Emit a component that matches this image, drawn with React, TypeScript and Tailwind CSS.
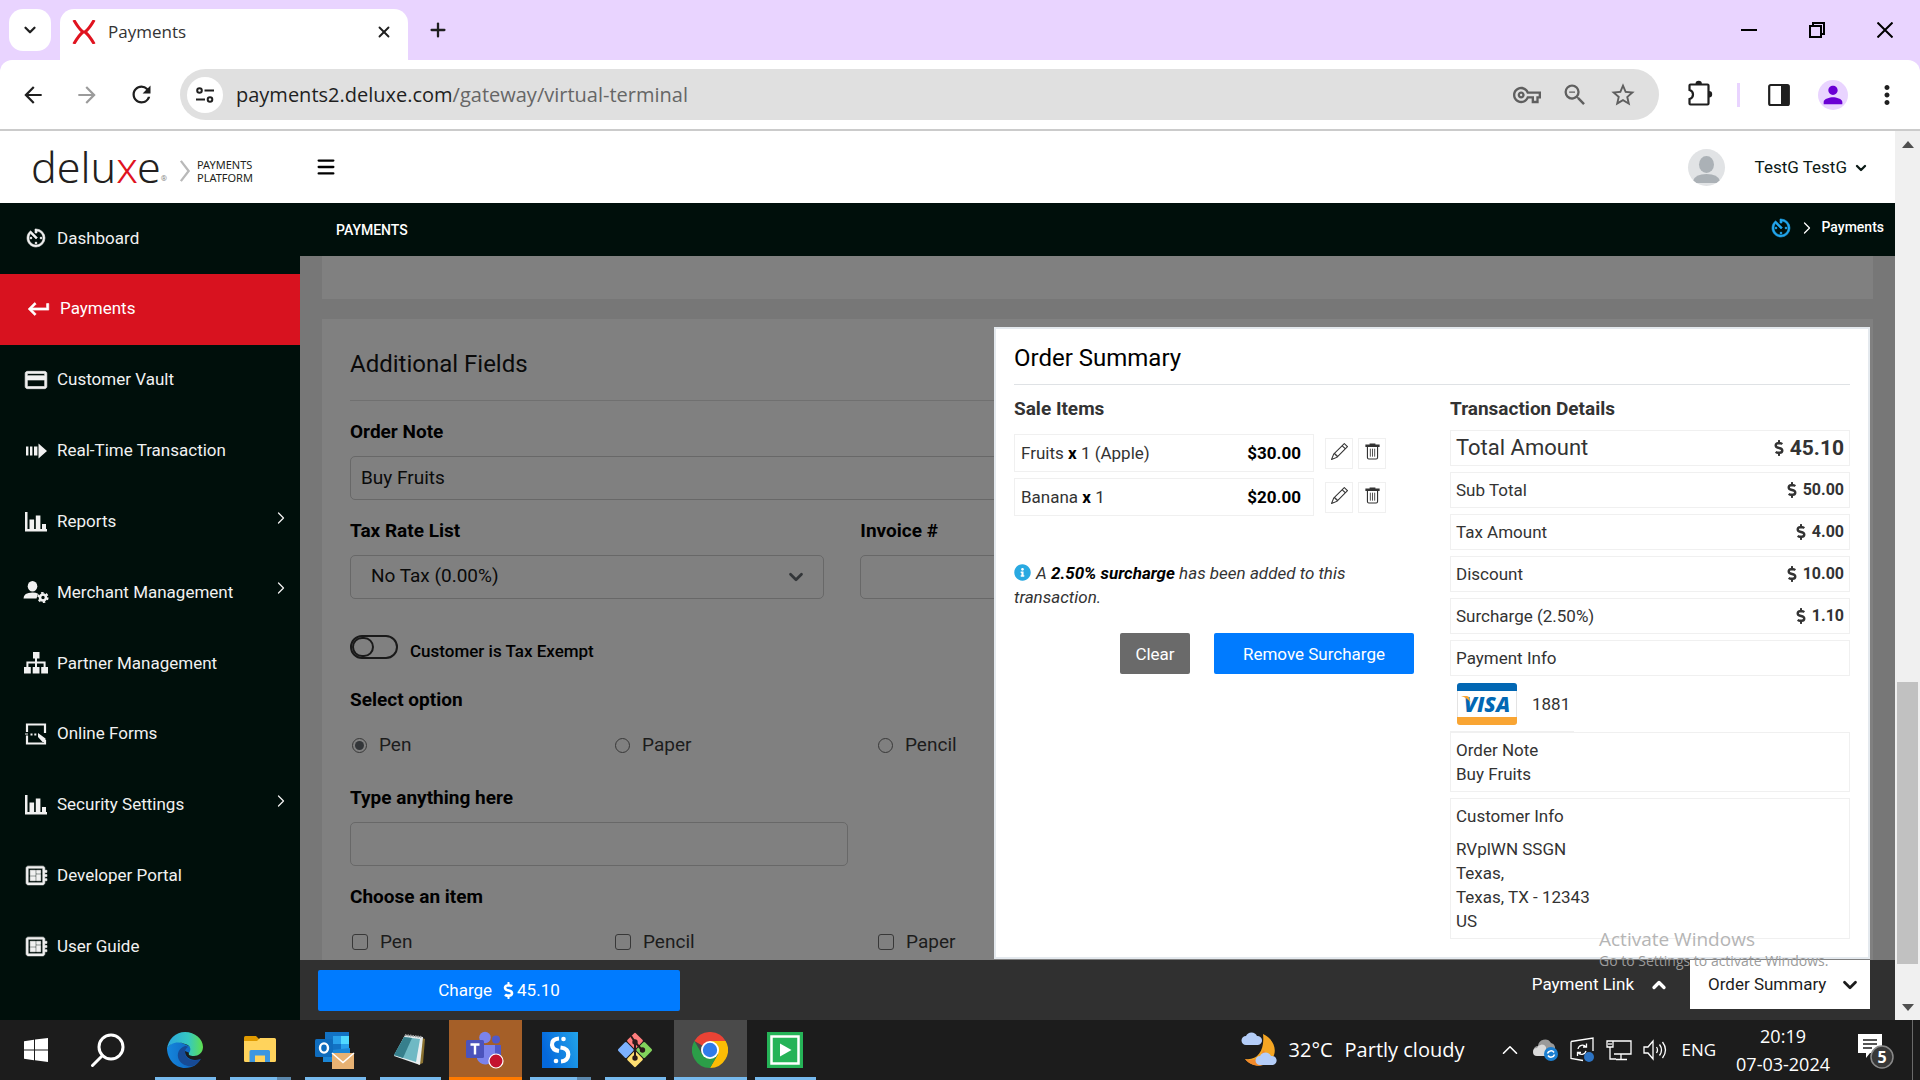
import React from "react";
import {
  MdAvTimer,
  MdKeyboardReturn,
  MdOutlineDeveloperBoard,
  MdMoreVert,
  MdArrowBack,
  MdArrowForward,
  MdRefresh,
  MdStarOutline,
  MdOutlineVpnKey,
  MdZoomOut,
  MdPerson,
  MdCreditCard,
} from "react-icons/md";
import { FaInfoCircle, FaDollarSign } from "react-icons/fa";
import { BsPencil } from "react-icons/bs";
import { ChevronDown, ChevronRight, ChevronUp, X, Plus, Menu } from "lucide-react";

const segoe = "font-['Open_Sans','Noto_Sans',sans-serif]";

/* ---------- icons ---------- */

function BarsIcon() {
  return (
    <svg viewBox="0 0 22 20" className="h-5 w-[22px]" fill="currentColor" aria-hidden="true">
      <path d="M0 0h2.500v17H22v2.600H0zM4.500 7.500h4.600V17H4.500zM10.800 3.500h4.600V17h-4.600zM17 12h4v5h-4z" />
    </svg>
  );
}

function StripedArrowIcon() {
  return (
    <svg viewBox="0 0 22 16" className="h-4 w-[22px]" fill="currentColor" aria-hidden="true">
      <path d="M1 3.500h2.400v9H1zM5 3.500h2.400v9H5zM9 3.500h3.400v9H9zM13.500 0.500L22 8l-8.500 7.500z" />
    </svg>
  );
}

function MerchantIcon() {
  return (
    <svg viewBox="0 0 26 22" className="h-[22px] w-[26px]" fill="currentColor" aria-hidden="true">
      <ellipse cx="9.500" cy="5.200" rx="4.800" ry="5.200" />
      <path d="M0.500 17.500q0-6 9-6 3.500 0 5.500 1.200l-1.500 4.800z" />
      <circle cx="20" cy="16.500" r="3" fill="none" stroke="currentColor" strokeWidth="2.600" />
      <circle cx="20" cy="16.500" r="4.700" fill="none" stroke="currentColor" strokeWidth="1.800" strokeDasharray="2.460 2.460" />
    </svg>
  );
}

function HierarchyIcon() {
  return (
    <svg viewBox="0 0 24 22" className="h-[22px] w-6" fill="currentColor" aria-hidden="true">
      <path d="M9 0h6.500v6.500H9zM0 15h6.800v6.500H0zM8.700 15h6.800v6.500H8.700zM17.200 15H24v6.500h-6.800z" />
      <path d="M12 6v9M3.400 15v-4.500h17.200V15" fill="none" stroke="currentColor" strokeWidth="2" />
    </svg>
  );
}

function OnlineFormIcon() {
  return (
    <svg viewBox="0 0 22 22" className="h-[22px] w-[22px]" aria-hidden="true">
      <path d="M2 9V1.500h18V10M2 12.500V20.500h18V17" fill="none" stroke="currentColor" strokeWidth="2.200" />
      <path d="M13 10l7.500 5.500V19h-3L13 14zM5.500 10.500h2v2h-2zM9.300 10.500h2v2h-2z" fill="currentColor" />
      <path d="M0 10.500h3v1H0z" fill="currentColor" />
    </svg>
  );
}

function TrashIcon() {
  return (
    <svg viewBox="0 0 16 18" className="h-[17px] w-[15px]" fill="none" stroke="currentColor" strokeWidth="1.200" aria-hidden="true">
      <path d="M1 3.500V2.200h14v1.300zM5.500 2V1h5v1M2.600 3.800V15.500q0 1.500 1.500 1.500h7.800q1.500 0 1.500-1.500V3.800" />
      <path d="M5.700 6v8.500M8 6v8.500M10.300 6v8.500" strokeWidth="0.900" />
    </svg>
  );
}

function Favicon() {
  return (
    <svg viewBox="0 0 24 24" className="h-6 w-6" fill="none" stroke="#e0131f" strokeWidth="3" aria-hidden="true">
      <path d="M1.800 0Q7 9 11 12Q7 15 1.800 24M22.200 0Q17 9 13 12Q17 15 22.200 24M9 12h6" />
    </svg>
  );
}

function TuneIcon() {
  return (
    <svg viewBox="0 0 18 18" className="h-[18px] w-[18px]" fill="none" stroke="#1f1f1f" strokeWidth="2" aria-hidden="true">
      <circle cx="3.500" cy="4.500" r="2.300" />
      <path d="M8.500 4.500H18M0 13.500h9" />
      <circle cx="14" cy="13.500" r="2.300" />
    </svg>
  );
}

function PuzzleIcon() {
  return (
    <svg viewBox="0 0 26 26" className="h-[26px] w-[26px]" aria-hidden="true">
      <path d="M3.500 4.500h17q1 0 1 1v18q0 1-1 1h-17q-1 0-1-1V19q3.500-1 3.500-4.500T2.500 10V5.500q0-1 1-1z" fill="none" stroke="currentColor" strokeWidth="2.200" />
      <path d="M8.500 4a3.200 3.200 0 0 1 6.400 0zM22 11a3.200 3.200 0 0 1 0 6.400z" fill="currentColor" />
    </svg>
  );
}

function VisaCard() {
  return (
    <svg viewBox="0 0 60 42" className="h-[42px] w-[60px]" role="img" aria-label="Visa">
      <rect x="0.500" y="0.500" width="59" height="41" rx="3" fill="#fff" stroke="#e3e3e3" />
      <path d="M3 0h54a3 3 0 0 1 3 3v5H0V3a3 3 0 0 1 3-3z" fill="#0267b3" />
      <path d="M0 34h60v5a3 3 0 0 1-3 3H3a3 3 0 0 1-3-3z" fill="#f9a533" />
      <text x="7" y="28.500" fontSize="21" fontWeight="800" fontStyle="italic" fontFamily="Open Sans, sans-serif" fill="#0267b3">VISA</text>
      <path d="M4 13h6q2 0 2.500 2.500l1 4Q10 14.500 4 13z" fill="#f9a533" />
    </svg>
  );
}

/* ---------- browser frame ---------- */

function TabStrip() {
  return (
    <div className="flex h-[60px] shrink-0 items-stretch bg-[#e9d4ff]">
      <button aria-label="Search tabs" className="mt-[9px] ml-[9px] flex h-[42px] w-[42px] items-center justify-center rounded-[14px] bg-white text-[#1f1f1f]">
        <ChevronDown size={18} strokeWidth={3} />
      </button>
      <div className="mt-[9px] ml-[9px] flex w-[348px] items-center rounded-t-[14px] bg-white pr-3 pb-[6px] pl-3">
        <Favicon />
        <span className={`ml-3 text-[17px] text-[#333] ${segoe}`}>Payments</span>
        <button aria-label="Close tab" className="ml-auto flex h-6 w-6 items-center justify-center text-[#1f1f1f]">
          <X size={18} strokeWidth={2.5} />
        </button>
      </div>
      <button aria-label="New tab" className="ml-[18px] flex w-6 items-center justify-center text-[#1f1f1f]">
        <Plus size={22} strokeWidth={2.5} />
      </button>
      <div className="ml-auto flex items-center pr-[1px] text-black">
        <button aria-label="Minimize" className="flex h-full w-[69px] items-center justify-center">
          <svg viewBox="0 0 16 16" className="h-4 w-4" aria-hidden="true"><path d="M0 8h16" stroke="currentColor" strokeWidth="2" /></svg>
        </button>
        <button aria-label="Restore" className="flex h-full w-[68px] items-center justify-center">
          <svg viewBox="0 0 16 16" className="h-4 w-4" fill="none" stroke="currentColor" strokeWidth="2" aria-hidden="true"><path d="M1 4h11v11H1zM4 4V1h11v11h-3" /></svg>
        </button>
        <button aria-label="Close window" className="flex h-full w-[68px] items-center justify-center">
          <svg viewBox="0 0 16 16" className="h-4 w-4" stroke="currentColor" strokeWidth="2" aria-hidden="true"><path d="M0.500 0.500l15 15M15.500 0.500l-15 15" /></svg>
        </button>
      </div>
    </div>
  );
}

function Toolbar() {
  return (
    <div className="shrink-0 bg-[#e9d4ff]">
      <div className="flex h-[71px] items-center rounded-t-[12px] border-b-2 border-[#cbcbcb] bg-white pr-[18px] pl-5 text-[#1f1f1f]">
        <button aria-label="Back"><MdArrowBack size={26} /></button>
        <button aria-label="Forward" className="ml-7 text-[#9b9b9b]"><MdArrowForward size={26} /></button>
        <button aria-label="Reload" className="ml-7"><MdRefresh size={27} /></button>
        <div className="ml-[25px] flex h-[51px] flex-1 items-center rounded-full bg-[#e0e0e0] pr-[22px] pl-[7px]">
          <button aria-label="Site information" className="flex h-9 w-9 items-center justify-center rounded-full bg-white"><TuneIcon /></button>
          <div className={`ml-[13px] text-[20px] text-[#1f1f1f] ${segoe}`}>
            payments2.deluxe.com<span className="text-[#666]">/gateway/virtual-terminal</span>
          </div>
          <div className="ml-auto flex items-center gap-5 text-[#5f5f5f]">
            <button aria-label="Passwords"><MdOutlineVpnKey size={28} /></button>
            <button aria-label="Zoom"><MdZoomOut size={28} /></button>
            <button aria-label="Bookmark"><MdStarOutline size={28} /></button>
          </div>
        </div>
        <button aria-label="Extensions" className="mb-1 ml-7"><PuzzleIcon /></button>
        <span className="ml-6 h-6 w-[3px] bg-[#e9d4ff]" />
        <button aria-label="Side panel" className="ml-[28px]">
          <svg viewBox="0 0 22 24" className="h-6 w-[22px]" aria-hidden="true">
            <rect x="1.200" y="2" width="19.600" height="20" rx="1.500" fill="none" stroke="currentColor" strokeWidth="2.200" />
            <path d="M13 2h8v20h-8z" fill="currentColor" />
          </svg>
        </button>
        <button aria-label="Profile" className="ml-7 flex h-[30px] w-[30px] items-center justify-center rounded-full bg-[#e9d4ff] text-[#6a00d4]"><MdPerson size={28} /></button>
        <button aria-label="Browser menu" className="ml-6"><MdMoreVert size={30} /></button>
      </div>
    </div>
  );
}

/* ---------- application frame ---------- */

function Header() {
  return (
    <header className="flex h-[72px] shrink-0 items-center bg-white pr-[26px] pl-[31px]">
      <a href="#home" className="flex items-center" aria-label="deluxe payments platform">
        <span className="font-['Noto_Sans',sans-serif] text-[43px] leading-[56px] font-light text-[#231f20]">
          delu<span className="text-[#e0131f]">x</span>e
        </span>
        <span className="mt-6 text-[8px] text-[#888]">®</span>
        <svg viewBox="0 0 12 24" className="mt-2 ml-3 h-[22px] w-3" fill="none" stroke="#b9b9b9" strokeWidth="2.500" aria-hidden="true">
          <path d="M1.500 1l8.500 11L1.500 23" />
        </svg>
        <span className="mt-2 ml-[6px] font-['Noto_Sans',sans-serif] text-[11px] leading-[13px] text-[#231f20]">
          PAYMENTS<br />PLATFORM
        </span>
      </a>
      <button aria-label="Toggle menu" className="ml-[62px] text-black"><Menu size={22} strokeWidth={2.5} /></button>
      <div className="mr-px ml-auto flex h-[37px] w-[37px] items-end justify-center overflow-hidden rounded-full bg-[#e1e3e5]">
        <svg viewBox="0 0 37 37" className="h-[37px] w-[37px]" fill="#abb1b6" aria-hidden="true">
          <ellipse cx="18.500" cy="15.500" rx="7.500" ry="8.500" />
          <path d="M5 32q2-7 13.500-7T32 32q-2 2-3 2H8q-1 0-3-2z" />
        </svg>
      </div>
      <button className="ml-[29px] flex items-center gap-[6px] pt-[2px] text-[17px] text-[#0b1a16]">
        TestG TestG
        <ChevronDown size={16} strokeWidth={3.5} />
      </button>
    </header>
  );
}

const heavy = "[&_[fill=none]]:stroke-none";

const navItems: { label: string; icon: React.ReactNode; more?: boolean; active?: boolean }[] = [
  { label: "Dashboard", icon: <MdAvTimer size={24} strokeWidth={0.6} className={heavy} /> },
  { label: "Payments", icon: <MdKeyboardReturn size={26} strokeWidth={0.6} className={heavy} />, active: true },
  { label: "Customer Vault", icon: <MdCreditCard size={26} strokeWidth={0.6} className={heavy} /> },
  { label: "Real-Time Transaction", icon: <StripedArrowIcon /> },
  { label: "Reports", icon: <BarsIcon />, more: true },
  { label: "Merchant Management", icon: <MerchantIcon />, more: true },
  { label: "Partner Management", icon: <HierarchyIcon /> },
  { label: "Online Forms", icon: <OnlineFormIcon /> },
  { label: "Security Settings", icon: <BarsIcon />, more: true },
  { label: "Developer Portal", icon: <MdOutlineDeveloperBoard size={25} strokeWidth={0.6} className={heavy} /> },
  { label: "User Guide", icon: <MdOutlineDeveloperBoard size={25} strokeWidth={0.6} className={heavy} /> },
];

function Sidebar() {
  return (
    <nav className="w-[300px] shrink-0 bg-[#000f0b] text-white">
      <ul className="grid h-[779px] grid-rows-11">
        {navItems.map((n) => (
          <li key={n.label}>
            <a
              href={`#${n.label}`}
              className={
                n.active
                  ? "flex h-full items-center bg-[#d8121f] pr-[9px] pl-[25px] text-[17px]"
                  : "flex h-full items-center pr-[9px] pl-[22px] text-[17px] text-[#f1f1f1]"
              }
            >
              <span className="flex w-7 items-center justify-center">{n.icon}</span>
              <span className="ml-[7px]">{n.label}</span>
              {n.more && <ChevronRight size={20} strokeWidth={1.5} className="mb-2 ml-auto" />}
            </a>
          </li>
        ))}
      </ul>
    </nav>
  );
}

function Subheader() {
  return (
    <div className="flex h-[53px] shrink-0 items-center bg-[#000f0b] pr-[11px] pl-9 text-white">
      <h1 className="pt-[2px] text-[14px] font-medium">PAYMENTS</h1>
      <div className="mb-1 ml-auto flex items-center text-[14px] font-medium">
        <a href="#dashboard" aria-label="Dashboard" className="text-[#22a6ee]"><MdAvTimer size={24} strokeWidth={0.6} className={heavy} /></a>
        <ChevronRight size={20} strokeWidth={1.5} className="mx-1" />
        <span>Payments</span>
      </div>
    </div>
  );
}

/* ---------- form ---------- */

const labelClass = "block text-[19px] leading-6 font-bold text-black";
const fieldClass = "mt-3 block h-11 w-full rounded-[5px] border border-[#686868] bg-transparent pb-[2px] text-[19px] text-[#0a0a0a]";

function ChoiceRow({ type, name, options, checked }: { type: "radio" | "checkbox"; name: string; options: string[]; checked?: string }) {
  return (
    <div className="mt-[21px] flex h-6">
      {options.map((o) => (
        <label key={o} className="flex w-[263px] items-center gap-3 pl-[2px] text-[19px] leading-6 text-[#1c1c1c]">
          {type === "radio" ? (
            <input
              type="radio"
              name={name}
              defaultChecked={o === checked}
              className="h-[15px] w-[15px] appearance-none rounded-full border border-[#383838] bg-clip-content p-[2px] checked:bg-[#333639]"
            />
          ) : (
            <input type="checkbox" name={name} className="h-4 w-4 appearance-none rounded-[3px] border border-[#383838]" />
          )}
          {o}
        </label>
      ))}
    </div>
  );
}

function AdditionalFields() {
  return (
    <section className="mx-[22px] mt-5 flex-1 bg-[#808080] px-[28px] pt-[27px]">
      <h2 className="border-b border-[#707070] pb-[18px] text-[24px] leading-9 font-normal text-[#0a0a0a]">Additional Fields</h2>
      <label htmlFor="note" className={`mt-[19px] ${labelClass}`}>Order Note</label>
      <input id="note" defaultValue="Buy Fruits" className={`px-[10px] ${fieldClass}`} />
      <div className="mt-[19px] grid grid-cols-3 gap-9">
        <div>
          <label htmlFor="tax" className={labelClass}>Tax Rate List</label>
          <div className="relative">
            <select id="tax" className={`appearance-none px-5 ${fieldClass}`}>
              <option>No Tax (0.00%)</option>
            </select>
            <ChevronDown size={22} strokeWidth={3} className="pointer-events-none absolute top-[11px] right-[17px] text-[#333639]" />
          </div>
        </div>
        <div>
          <label htmlFor="invoice" className={labelClass}>Invoice #</label>
          <input id="invoice" className={`px-[10px] ${fieldClass}`} />
        </div>
      </div>
      <label className="mt-9 flex h-[26px] items-start gap-3 text-[17px] leading-5 font-medium text-black">
        <input
          type="checkbox"
          role="switch"
          className="h-6 w-12 appearance-none rounded-full border-2 border-[#1a1a1a] before:block before:h-5 before:w-[22px] before:rounded-full before:border-2 before:border-[#1a1a1a]"
        />
        <span className="self-end">Customer is Tax Exempt</span>
      </label>
      <p className={`mt-[27px] ${labelClass}`}>Select option</p>
      <ChoiceRow type="radio" name="option" options={["Pen", "Paper", "Pencil"]} checked="Pen" />
      <label htmlFor="anything" className={`mt-[29px] ${labelClass}`}>Type anything here</label>
      <div className="w-1/3">
        <input id="anything" className={`px-[10px] ${fieldClass}`} />
      </div>
      <p className={`mt-[19px] ${labelClass}`}>Choose an item</p>
      <ChoiceRow type="checkbox" name="item" options={["Pen", "Pencil", "Paper"]} />
    </section>
  );
}

/* ---------- order summary ---------- */

const box = "border border-[#f0f0f0]";

function SaleItem({ name, rest, price }: { name: string; rest: string; price: string }) {
  return (
    <li className="flex items-center">
      <div className={`flex h-[38px] w-[300px] items-center justify-between pr-3 pl-[6px] ${box}`}>
        <span>{name} <b className="font-bold text-black">x</b> {rest}</span>
        <b className="font-bold text-black">{price}</b>
      </div>
      <button aria-label={`Edit ${name}`} className={`ml-[11px] flex h-[31px] w-7 items-center justify-center pb-1 ${box}`}><BsPencil size={17} /></button>
      <button aria-label={`Delete ${name}`} className={`ml-[5px] flex h-[31px] w-7 items-center justify-center pb-1 ${box}`}><TrashIcon /></button>
    </li>
  );
}

function AmountRow({ label, value, large }: { label: string; value?: string; large?: boolean }) {
  return (
    <li className={`flex h-9 items-center justify-between px-[5px] ${box}`}>
      <span className={large ? "text-[22px]" : ""}>{label}</span>
      {value && (
        <span className="flex items-center gap-[3px] font-bold">
          <FaDollarSign size={16} />
          <span className={large ? "text-[21px]" : "text-[16px]"}>{value}</span>
        </span>
      )}
    </li>
  );
}

function OrderSummary() {
  return (
    <div role="dialog" aria-label="Order Summary" className="absolute right-[25px] bottom-px w-[876px] border-2 border-[#e4e9ee] bg-white px-[18px] pt-[11px] pb-[18px] text-[17px] leading-6 text-[#333]">
      <h2 className="border-b border-[#dfe2e5] pb-2 text-[24px] leading-9 text-black">Order Summary</h2>
      <div className="mt-3 grid grid-cols-2 gap-9">
        <section>
          <h3 className="text-[19px] leading-6 font-bold">Sale Items</h3>
          <ul className="mt-[13px] flex flex-col gap-[6px]">
            <SaleItem name="Fruits" rest="1 (Apple)" price="$30.00" />
            <SaleItem name="Banana" rest="1" price="$20.00" />
          </ul>
          <p className="mt-[45px] italic">
            <FaInfoCircle size={17} className="mr-[5px] mb-1 inline text-[#29a9e1]" />
            A <b className="font-bold text-black">2.50% surcharge</b> has been added to this transaction.
          </p>
          <div className="mt-6 flex justify-end gap-6 text-white">
            <button className="h-[41px] w-[70px] rounded-[2px] bg-[#6a6a6a]">Clear</button>
            <button className="h-[41px] w-[200px] rounded-[2px] bg-[#007bff]">Remove Surcharge</button>
          </div>
        </section>
        <section>
          <h3 className="text-[19px] leading-6 font-bold">Transaction Details</h3>
          <ul className="mt-[9px] flex flex-col gap-[6px]">
            <AmountRow label="Total Amount" value="45.10" large />
            <AmountRow label="Sub Total" value="50.00" />
            <AmountRow label="Tax Amount" value="4.00" />
            <AmountRow label="Discount" value="10.00" />
            <AmountRow label="Surcharge (2.50%)" value="1.10" />
            <AmountRow label="Payment Info" />
          </ul>
          <div className="flex h-14 w-[124px] items-center gap-[15px] border-b border-[#f0f0f0] pl-[7px]">
            <VisaCard />
            1881
          </div>
          <div className={`p-[5px] ${box}`}>
            <p>Order Note</p>
            <p>Buy Fruits</p>
          </div>
          <div className={`mt-[6px] p-[5px] ${box}`}>
            <p>Customer Info</p>
            <address className="mt-[9px] not-italic">
              RVplWN SSGN<br />Texas,<br />Texas, TX - 12343<br />US
            </address>
          </div>
        </section>
      </div>
    </div>
  );
}

function Footer() {
  return (
    <footer className="flex h-[60px] shrink-0 items-start bg-[#303030] pr-[25px] pl-[18px] text-[17px] text-white">
      <button className="mt-[10px] flex h-[41px] w-[362px] items-center justify-center rounded-[2px] bg-[#007bff]">
        Charge <FaDollarSign size={17} className="ml-2" /> 45.10
      </button>
      <button className="ml-auto flex h-[49px] items-center gap-[15px]">
        Payment Link <ChevronUp size={20} strokeWidth={4} />
      </button>
      <button className="ml-[21px] flex h-[49px] w-[180px] items-center justify-between bg-white pr-[9px] pl-[18px] text-[#1c1c1c]">
        Order Summary <ChevronDown size={22} strokeWidth={3} />
      </button>
    </footer>
  );
}

function Scrollbar() {
  return (
    <div className="flex w-[25px] shrink-0 flex-col items-center bg-[#f0f0f0]">
      <div className="flex h-[26px] items-center"><svg viewBox="0 0 12 7" className="h-[7px] w-3" aria-hidden="true"><path d="M0 7l6-7 6 7z" fill="#505050" /></svg></div>
      <div className="flex-[525]" />
      <div className="w-[21px] flex-[282] bg-[#c1c1c1]" />
      <div className="flex-[30]" />
      <div className="flex h-[26px] items-center"><svg viewBox="0 0 12 7" className="h-[7px] w-3" aria-hidden="true"><path d="M0 0l6 7 6-7z" fill="#505050" /></svg></div>
    </div>
  );
}

/* ---------- taskbar ---------- */

function EdgeIcon() {
  return (
    <svg viewBox="0 0 36 36" className="h-9 w-9" aria-hidden="true">
      <defs>
        <linearGradient id="eg" x1="0" x2="1"><stop offset="0" stopColor="#2aa6e0" /><stop offset="0.600" stopColor="#36c8c0" /><stop offset="1" stopColor="#5fe04e" /></linearGradient>
        <linearGradient id="eb" x1="0" x2="1"><stop offset="0" stopColor="#1586dc" /><stop offset="1" stopColor="#0c5cb8" /></linearGradient>
      </defs>
      <path d="M0 16C0 27 8 36 18 36c8 0 13-4 15.500-9L22 14 8 8z" fill="url(#eb)" />
      <path d="M18 14c-6 2-9 8-6 14 3 5 9 7 14 6 3-1 6-4 8-7-7 3-16 1-16-7 0-2 1-4 3-5-1-1-2-1-3-1z" fill="#174a94" />
      <path d="M18 19c0 7 7 11 15.500 8L36 20l-9 3z" fill="#1c1c1c" />
      <path d="M0 17C1 7 9 0 18 0c10 0 18 7 18 15 0 6-5 9-9 9-4 0-6-1-5-3 3-4 1-8-4-9C10 9 3 11 0 17z" fill="url(#eg)" />
    </svg>
  );
}

function FolderIcon() {
  return (
    <svg viewBox="0 0 32 28" className="h-7 w-8" aria-hidden="true">
      <path d="M0 1.500Q0 0 1.500 0H12l3 3v3H0z" fill="#e09a00" />
      <path d="M0 5h13l3-3h14.500Q32 2 32 3.500V24.500q0 1.500-1.500 1.500h-29Q0 26 0 24.500z" fill="#ffd35c" />
      <path d="M5.500 26V15.500Q5.500 14 7 14h17.500q1.500 0 1.500 1.500V26h-5v-6.500h-10V26z" fill="#3c96e0" />
    </svg>
  );
}

function OutlookIcon() {
  return (
    <svg viewBox="0 0 40 38" className="h-[38px] w-10" aria-hidden="true">
      <path d="M10 1h24v30H8V16h2z" fill="#1272c4" />
      <path d="M18 5h8v8h-8zM26 13h8v8h-8z" fill="#29a0ea" />
      <path d="M26 5h8v8h-8z" fill="#50d9ff" />
      <path d="M8 20l27-3v14H8z" fill="#1b86d6" />
      <rect x="0" y="8" width="18" height="18" rx="1.500" fill="#0f6cbd" />
      <ellipse cx="9" cy="17" rx="4" ry="4.600" fill="none" stroke="#fff" strokeWidth="2.400" />
      <path d="M17 22h22v16H17z" fill="#e8b273" />
      <path d="M17 22l11 9.500L39 22" fill="none" stroke="#fff" strokeWidth="1.600" />
    </svg>
  );
}

function NotepadIcon() {
  return (
    <svg viewBox="0 0 34 34" className="h-[34px] w-[34px]" aria-hidden="true">
      <path d="M27 4l5 2-2 24-5 2z" fill="#8a7130" />
      <path d="M12 2l18 2-3 28-26-9z" fill="#e8eef0" />
      <path d="M11 4l16 2-4 23L1 22z" fill="#6fb9c4" />
      <path d="M11 4l8 1-9 20-9-3z" fill="#367f8c" />
      <path d="M12 2l17 2" stroke="#999" strokeWidth="2" strokeDasharray="1.500 1" />
    </svg>
  );
}

function TeamsIcon() {
  return (
    <svg viewBox="0 0 38 38" className="h-[38px] w-[38px]" aria-hidden="true">
      <circle cx="19" cy="6.500" r="5.800" fill="#7b83eb" />
      <circle cx="30" cy="8.500" r="4" fill="#5059c9" />
      <path d="M24 14h11v11q-1 5-6 6h-5z" fill="#5059c9" />
      <path d="M11 14h18v11a9.500 9.500 0 0 1-18 3z" fill="#7b83eb" />
      <rect x="0" y="9" width="18" height="18" rx="1.500" fill="#4b53bc" />
      <path d="M4.500 13.500h9M9 13.500v10" stroke="#fff" strokeWidth="2.400" />
      <circle cx="30" cy="30" r="7" fill="#c4122f" stroke="#fff" strokeWidth="1.200" />
    </svg>
  );
}

function SIcon() {
  return (
    <svg viewBox="0 0 36 36" className="h-9 w-9" aria-hidden="true">
      <defs><linearGradient id="sg" x1="0" x2="1" y1="0.300" y2="0"><stop offset="0" stopColor="#0468dc" /><stop offset="1" stopColor="#22a4ea" /></linearGradient></defs>
      <path d="M0 0h36v36H0z" fill="url(#sg)" />
      <path d="M17 6.500Q9.500 7 10 13Q10.500 18 17 19M18.500 15.500q8 1 7.800 7Q26 29 19 29.500" fill="none" stroke="#fff" strokeWidth="4.200" />
      <circle cx="21.500" cy="7" r="2.300" fill="#fff" />
      <circle cx="14" cy="29" r="2.300" fill="#fff" />
    </svg>
  );
}

function GitIcon() {
  return (
    <svg viewBox="0 0 36 36" className="h-9 w-9" aria-hidden="true">
      <g transform="rotate(45 18 18)">
        <rect x="5.500" y="5.500" width="12" height="12" rx="1.500" fill="#ff7d7d" />
        <rect x="18.500" y="5.500" width="12" height="12" rx="1.500" fill="#82d35c" />
        <rect x="5.500" y="18.500" width="12" height="12" rx="1.500" fill="#7cb2ff" />
        <rect x="18.500" y="18.500" width="12" height="12" rx="1.500" fill="#ffdf72" />
      </g>
      <path d="M14 4l4 6v16M18 10l7 8" fill="none" stroke="#2a1a1a" strokeWidth="2" />
      <circle cx="18" cy="10" r="2.700" fill="#2a1a1a" />
      <circle cx="25.500" cy="18" r="2.700" fill="#2a1a1a" />
      <circle cx="18" cy="26" r="2.700" fill="#2a1a1a" />
    </svg>
  );
}

function ChromeIcon() {
  return (
    <svg viewBox="0 0 36 36" className="h-9 w-9" aria-hidden="true">
      <path d="M18 18L2.400 9A18 18 0 0 1 33.600 9z" fill="#ea4335" />
      <path d="M18 18V9h15.600A18 18 0 0 1 18 36l7.800-13.500z" fill="#fbbc05" />
      <path d="M2.400 9A18 18 0 0 0 18 36l7.800-13.500L18 18 10.200 22.500z" fill="#2b9e48" />
      <circle cx="18" cy="18" r="9" fill="#fff" />
      <circle cx="18" cy="18" r="7.200" fill="#2f7bea" />
    </svg>
  );
}

function PlayIcon() {
  return (
    <svg viewBox="0 0 36 36" className="h-9 w-9" aria-hidden="true">
      <path d="M0 0h36v36H0z" fill="#25b357" />
      <path d="M4.500 4.500h27v27h-27z" fill="none" stroke="#fff" strokeWidth="2.500" />
      <path d="M13 11.500l11.500 6.500L13 24.500z" fill="#fff" />
    </svg>
  );
}

const apps = [
  { name: "Edge", icon: <EdgeIcon /> },
  { name: "File Explorer", icon: <FolderIcon />, stacked: true },
  { name: "Outlook", icon: <OutlookIcon /> },
  { name: "Notepad", icon: <NotepadIcon /> },
  { name: "Teams", icon: <TeamsIcon />, tone: "alert" },
  { name: "Screen tool", icon: <SIcon />, stacked: true },
  { name: "Git", icon: <GitIcon /> },
  { name: "Chrome", icon: <ChromeIcon />, tone: "active" },
  { name: "Recorder", icon: <PlayIcon /> },
];

function Taskbar() {
  return (
    <div className={`flex h-[60px] shrink-0 items-stretch bg-[#1c1c1c] text-white ${segoe}`}>
      <button aria-label="Start" className="flex w-[72px] items-center justify-center">
        <svg viewBox="0 0 24 24" className="h-6 w-6" fill="#fff" aria-hidden="true"><path d="M0 3.200l10-1.400v9.700H0zM11 1.600L24 0v11.500H11zM0 12.500h10v9.700L0 20.800zM11 12.500h13V24l-13-1.700z" /></svg>
      </button>
      <button aria-label="Search" className="flex w-[72px] items-center justify-center">
        <svg viewBox="0 0 34 34" className="h-[34px] w-[34px]" fill="none" stroke="#fff" strokeWidth="3" aria-hidden="true"><circle cx="20" cy="14" r="12" /><path d="M11.500 22.500L1.500 32.500" strokeLinecap="round" /></svg>
      </button>
      <div className="ml-[5px] flex gap-[2px]">
        {apps.map((a) => (
          <button
            key={a.name}
            aria-label={a.name}
            className={
              a.tone === "alert"
                ? "flex w-[73px] flex-col items-center bg-[#a55f28]"
                : a.tone === "active"
                  ? "flex w-[73px] flex-col items-center bg-[#4a4a4a]"
                  : "flex w-[73px] flex-col items-center"
            }
          >
            <span className="flex flex-1 items-center pt-[3px] pr-[2px]">{a.icon}</span>
            {a.tone === "alert" ? (
              <span className="h-[3px] w-full bg-[#ff7a00]" />
            ) : a.tone === "active" ? (
              <span className="h-[3px] w-full bg-[#76b9ed]" />
            ) : a.stacked ? (
              <span className="flex h-[3px] w-[61px]"><span className="w-[47px] bg-[#76b9ed]" /><span className="flex-1 bg-[#5b87ab]" /></span>
            ) : (
              <span className="h-[3px] w-[61px] bg-[#76b9ed]" />
            )}
          </button>
        ))}
      </div>

      <div className="ml-auto flex items-center text-[20px]">
        <svg viewBox="0 0 38 36" className="h-9 w-[38px]" aria-hidden="true">
          <path d="M22 2c11 5 15 17 9 25s-20 9-27 0c12 2 20-8 18-25z" fill="#f5a623" />
          <path d="M4 27c9 3 17-2 18-9l9 9c-7 9-20 9-27 0z" fill="#f28a2b" />
          <path d="M5 13a4.500 4.500 0 0 1 0-9 6 6 0 0 1 11 0 4.500 4.500 0 0 1 1 9z" fill="#b4cdf8" />
          <path d="M19 33a4.500 4.500 0 0 1 0-9 6 6 0 0 1 11 0 4.500 4.500 0 0 1 2 9z" fill="#b4cdf8" />
        </svg>
        <span className="ml-[10px]">32°C</span>
        <span className="ml-3">Partly cloudy</span>
        <ChevronUp size={26} strokeWidth={1.5} className="ml-[33px]" />
        <svg viewBox="0 0 26 24" className="ml-[10px] h-6 w-[26px]" aria-hidden="true">
          <path d="M5 17a4.500 4.500 0 0 1 0-9 7 7 0 0 1 13-3 5 5 0 0 1 3 8v4z" fill="#9a9a9a" />
          <path d="M4 18a4 4 0 0 1 0-8 5 5 0 0 1 9-1v9z" fill="#dadada" />
          <circle cx="18" cy="16" r="7" fill="#1b7fd1" />
          <path d="M14.500 15.500a3.600 3.600 0 0 1 6.500-1M21.500 16.500a3.600 3.600 0 0 1-6.500 1" stroke="#fff" strokeWidth="1.500" fill="none" />
        </svg>
        <svg viewBox="0 0 26 26" className="ml-[11px] h-[26px] w-[26px]" fill="none" stroke="#fff" strokeWidth="1.300" aria-hidden="true">
          <path d="M1 4.500L23 1v13M1 4.500v17l12 2" />
          <path d="M8 12a4.500 4.500 0 0 1 8-2M16.500 6.500V10H13M16 14a4.500 4.500 0 0 1-8 1.500M7.500 19v-3.500H11" />
          <circle cx="19" cy="20" r="5" fill="#2d74c4" stroke="none" />
        </svg>
        <svg viewBox="0 0 26 22" className="ml-[10px] h-[22px] w-[26px]" fill="none" stroke="#fff" strokeWidth="1.300" aria-hidden="true">
          <path d="M7.500 2H25v13H8M15 15v5M10 20.500h11M1 2h6v6H1zM4 8v12h6M3 4v2M5 4v2" />
        </svg>
        <svg viewBox="0 0 24 22" className="ml-[11px] h-[22px] w-6" fill="none" stroke="#fff" strokeWidth="1.300" aria-hidden="true">
          <path d="M1 8h4l5-6v18l-5-6H1zM13.500 8q2 3 0 6M16.500 5.500q4 5.500 0 11M19.500 3q6 8 0 16" />
        </svg>
        <span className="ml-[14px] text-[17px]">ENG</span>
        <div className="ml-5 text-center text-[18px] leading-7">
          20:19<br />07-03-2024
        </div>
        <button aria-label="5 notifications" className="ml-[27px]">
          <svg viewBox="0 0 38 38" className="h-[38px] w-[38px]" aria-hidden="true">
            <path d="M1 3h24v19H13l-4 5v-5H1z" fill="#fff" />
            <path d="M6 9h14M6 13h14M6 17h9" stroke="#1c1c1c" strokeWidth="1.300" />
            <circle cx="25" cy="26" r="11" fill="#383838" stroke="#8a8a8a" strokeWidth="1.500" />
            <text x="25" y="32" textAnchor="middle" fontSize="16" fontWeight="700" fill="#fff">5</text>
          </svg>
        </button>
        <span className="mr-[7px] ml-[17px] h-[60px] w-px bg-[#6a6a6a]" />
      </div>
    </div>
  );
}

export default function App() {
  return (
    <div className="relative flex min-h-screen flex-col bg-white font-['Roboto',sans-serif] text-[16px]">
      <TabStrip />
      <Toolbar />
      <div className="flex flex-1">
        <div className="flex min-w-0 flex-1 flex-col">
          <Header />
          <div className="flex flex-1">
            <Sidebar />
            <div className="flex min-w-0 flex-1 flex-col">
              <Subheader />
              <main className="relative flex flex-1 flex-col bg-[#777777]">
                <div className="mx-[22px] h-[43px] bg-[#808080]" />
                <AdditionalFields />
                <OrderSummary />
              </main>
              <Footer />
            </div>
          </div>
        </div>
        <Scrollbar />
      </div>
      <Taskbar />
      <div className={`pointer-events-none absolute right-[85px] bottom-[109px] w-[236px] whitespace-nowrap text-[#b5b5b5] ${segoe}`}>
        <p className="text-[19px] leading-6">Activate Windows</p>
        <p className="text-[14px] leading-5 text-[#9b9b9b]">Go to Settings to activate Windows.</p>
      </div>
    </div>
  );
}
